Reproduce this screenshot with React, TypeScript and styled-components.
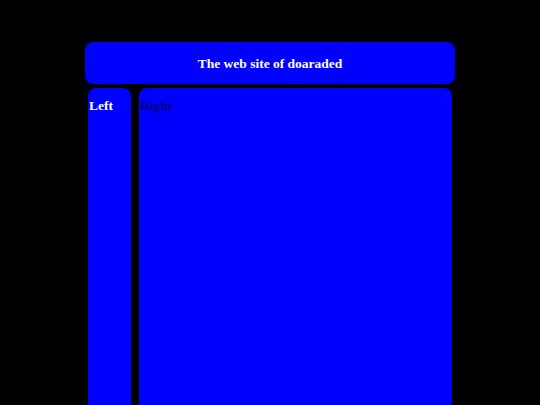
import React from "react";
import styled, { createGlobalStyle } from "styled-components";

const Global = createGlobalStyle`
  html, body { margin: 0; padding: 0; background: #000; }
  body { font-family: "Liberation Serif", "Times New Roman", serif; }
  *, *::before, *::after { box-sizing: border-box; }
`;

const Page = styled.div`
  width: 370px;
  margin: 0 auto;
  padding-top: 42px;
  height: 405px;
  overflow: hidden;
  display: flex;
  flex-direction: column;
`;

const Header = styled.header`
  flex-shrink: 0;
  height: 42px;
  padding-top: 2px;
  background: #0000ff;
  border-radius: 8px;
  display: flex;
  align-items: center;
  justify-content: center;
  color: #fff;
  font-weight: bold;
  font-size: 13.5px;
`;

const Columns = styled.div`
  flex: 1;
  display: flex;
  gap: 8px;
  padding: 4px 3px 0 3px;
`;

const Column = styled.div<{ $wide?: boolean; $color: string }>`
  ${(p) => (p.$wide ? "flex: 1;" : "width: 43px; flex-shrink: 0;")}
  background: #0000ff;
  border-radius: 8px 8px 0 0;
  color: ${(p) => p.$color};
  font-weight: bold;
  font-size: 13.5px;
  padding-top: 10px;
  padding-left: 1px;
  min-height: 400px;
`;

export default function App() {
  return (
    <>
      <Global />
      <Page>
        <Header>The web site of doaraded</Header>
        <Columns>
          <Column $color="#ffffff">Left</Column>
          <Column $wide $color="#000080">Right</Column>
        </Columns>
      </Page>
    </>
  );
}
